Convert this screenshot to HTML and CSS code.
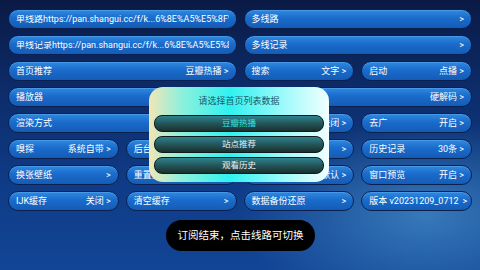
FILE: index.html
```html
<!doctype html>
<html lang="zh-CN">
    <head>
        <meta charset="utf-8">
        <title>设置</title>
        <link rel="stylesheet" href="styles.css">
    </head>
    <body>
        <div class="settings">
            <div class="item wide"><span class="label clip">单线路https://pan.shangui.cc/f/k...6%8E%A5%E5%8F%8F%E5%88%97</span></div>
            <div class="item wide"><span class="label">多线路</span><span class="value">&gt;</span></div>

            <div class="item wide"><span class="label clip">单线记录https://pan.shangui.cc/f/k...6%8E%A5%E5%8F%8F%E5%88%97</span></div>
            <div class="item wide"><span class="label">多线记录</span><span class="value">&gt;</span></div>

            <div class="item wide"><span class="label">首页推荐</span><span class="value">豆瓣热播 &gt;</span></div>
            <div class="item"><span class="label">搜索</span><span class="value">文字 &gt;</span></div>
            <div class="item"><span class="label">启动</span><span class="value">点播 &gt;</span></div>

            <div class="item full"><span class="label">播放器</span><span class="value">硬解码 &gt;</span></div>

            <div class="item wide"><span class="label">渲染方式</span><span class="value">TextureView &gt;</span></div>
            <div class="item"><span class="label">安全DNS</span><span class="value">关闭 &gt;</span></div>
            <div class="item"><span class="label">去广</span><span class="value">开启 &gt;</span></div>

            <div class="item"><span class="label">嗅探</span><span class="value">系统自带 &gt;</span></div>
            <div class="item"><span class="label">后台播放</span><span class="value">关闭 &gt;</span></div>
            <div class="item"><span class="label">主页</span><span class="value">&gt;</span></div>
            <div class="item"><span class="label">历史记录</span><span class="value">30条 &gt;</span></div>

            <div class="item"><span class="label">换张壁纸</span><span class="value">&gt;</span></div>
            <div class="item"><span class="label">重置壁纸</span><span class="value">&gt;</span></div>
            <div class="item"><span class="label">缩放</span><span class="value">默认 &gt;</span></div>
            <div class="item"><span class="label">窗口预览</span><span class="value">开启 &gt;</span></div>

            <div class="item"><span class="label">IJK缓存</span><span class="value">关闭 &gt;</span></div>
            <div class="item"><span class="label">清空缓存</span><span class="value">&gt;</span></div>
            <div class="item"><span class="label">数据备份还原</span><span class="value">&gt;</span></div>
            <div class="item"><span class="label">版本 v20231209_0712</span><span class="value">&gt;</span></div>
        </div>

        <div class="dialog">
            <p class="dialog-title">请选择首页列表数据</p>
            <div class="choice active">豆瓣热播</div>
            <div class="choice">站点推荐</div>
            <div class="choice">观看历史</div>
        </div>

        <div class="toast">订阅结束，点击线路可切换</div>
    </body>
</html>
```

FILE: styles.css
```css
html, body {
    margin: 0;
    padding: 0;
    width: 480px;
    height: 270px;
    overflow: hidden;
}
body {
    position: relative;
    font-family: Roboto, "Noto Sans CJK SC", sans-serif;
    color: white;
    background:
        radial-gradient(ellipse 190px 95px at 425px 215px, rgba(80, 160, 215, 0.6), rgba(80, 160, 215, 0) 100%),
        linear-gradient(180deg, #0a1a45 0%, #0d2d6c 35%, #0f3c88 70%, #124596 100%);
}

.settings {
    display: grid;
    grid-template-columns: repeat(4, 1fr);
    grid-auto-rows: 20px;
    column-gap: 7px;
    row-gap: 6px;
    padding: 9px 8px 0 8px;
}
.item {
    display: flex;
    align-items: center;
    justify-content: space-between;
    min-width: 0;
    padding: 0 7px 0 7px;
    border: 1.5px solid #0a2150;
    border-radius: 11px;
    background: linear-gradient(180deg, #2f8ae0 0%, #1a6bcb 45%, #135cb6 100%);
    box-shadow: inset 0 1px 0 rgba(150, 200, 255, 0.25);
    font-size: 9px;
    line-height: 1;
    white-space: nowrap;
}
.wide {
    grid-column: span 2;
}
.full {
    grid-column: span 4;
}
.clip {
    overflow: hidden;
}
.value {
    flex-shrink: 0;
    padding-left: 4px;
}

.dialog {
    position: absolute;
    left: 149px;
    top: 87px;
    width: 180px;
    height: 95px;
    box-sizing: border-box;
    padding: 0 5px;
    border-radius: 14px;
    background: linear-gradient(90deg, #f2e6b6 0%, #8ef0dc 18%, #2ff2f0 45%, #9ffafa 75%, #f2ffff 100%);
}
.dialog-title {
    margin: 0;
    height: 28px;
    line-height: 28px;
    text-align: center;
    font-size: 9px;
    color: #1d5a6a;
}
.choice {
    height: 17px;
    box-sizing: border-box;
    margin-bottom: 4px;
    border: 1.5px solid #0e1a1c;
    border-radius: 8px;
    background: linear-gradient(180deg, #2f8290 0%, #245a5e 45%, #1b2f2c 100%);
    text-align: center;
    font-size: 8.5px;
    line-height: 14px;
    color: #f2f2f2;
}
.choice.active {
    color: #2ee6e0;
}

.toast {
    position: absolute;
    left: 166px;
    top: 220px;
    width: 149px;
    height: 31px;
    border-radius: 16px;
    background: #000;
    text-align: center;
    line-height: 31px;
    font-size: 10.5px;
    color: white;
}
```
